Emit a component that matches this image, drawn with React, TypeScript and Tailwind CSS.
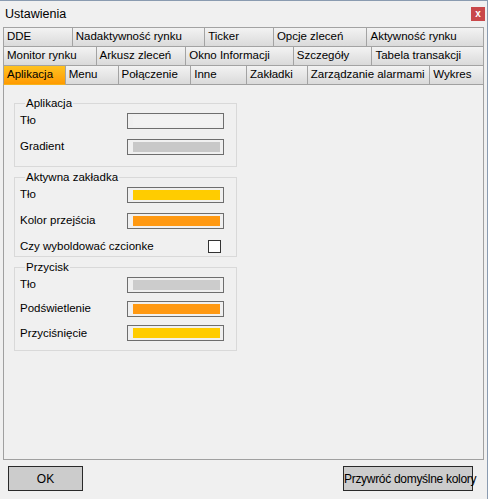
const rows: { label: string; w: number; active?: boolean }[][] = [
  [
    { label: 'DDE', w: 70 },
    { label: 'Nadaktywność rynku', w: 134 },
    { label: 'Ticker', w: 70 },
    { label: 'Opcje zleceń', w: 95 },
    { label: 'Aktywność rynku', w: 118 },
  ],
  [
    { label: 'Monitor rynku', w: 94 },
    { label: 'Arkusz zleceń', w: 91 },
    { label: 'Okno Informacji', w: 109 },
    { label: 'Szczegóły', w: 80 },
    { label: 'Tabela transakcji', w: 113 },
  ],
  [
    { label: 'Aplikacja', w: 63, active: true },
    { label: 'Menu', w: 54 },
    { label: 'Połączenie', w: 74 },
    { label: 'Inne', w: 57 },
    { label: 'Zakładki', w: 62 },
    { label: 'Zarządzanie alarmami', w: 124 },
    { label: 'Wykres', w: 55 },
  ],
]

function Swatch({ color }: { color: string }) {
  return (
    <div className="flex h-[16px] w-[97px] border border-[#6e6e6e] bg-[#f0f0f0] pl-[5px] pr-[3px] py-[2px]">
      <div className="flex-1" style={{ backgroundColor: color }} />
    </div>
  )
}

function Row({ label, color, className = '' }: { label: string; color: string; className?: string }) {
  return (
    <div className={`flex items-center ${className}`}>
      <span className="w-[107px]">{label}</span>
      <Swatch color={color} />
    </div>
  )
}

function Group({ title, className = '', children }: { title: string; className?: string; children: React.ReactNode }) {
  return (
    <fieldset className={`w-[223px] border border-[#d9d9d9] pl-[5px] ${className}`}>
      <legend className="ml-[5px] px-[1px] leading-[14px]">{title}</legend>
      {children}
    </fieldset>
  )
}

export default function App() {
  return (
    <div
      className="flex h-[499px] w-[488px] flex-col border-t border-r border-[#8a9bb0] bg-[#f0f0f0] text-[11.5px] whitespace-nowrap text-black"
      style={{ fontFamily: '"Liberation Sans", Arial, sans-serif' }}
    >
      <div className="flex h-[26px] items-center justify-between pl-[5px] pr-[2px]">
        <span className="text-[12.5px]">Ustawienia</span>
        <div className="flex h-[14px] w-[14px] items-center justify-center bg-[#c9484a] text-[10px] font-bold leading-none text-white">
          x
        </div>
      </div>

      <div className="px-[3px]">
        {rows.map((row, i) => (
          <div key={i} className={`flex ${i > 0 ? '-mt-px' : ''}`}>
            {row.map((t, j) => (
              <div
                key={t.label}
                style={{ width: t.w }}
                className={`flex h-[20px] items-center overflow-hidden border border-[#a3a3a3] pl-[3px] leading-none ${j > 0 ? '-ml-px' : ''} ${
                  t.active
                    ? 'relative z-10 border-b-[#f6b21a] bg-linear-to-b from-[#ffc21f] to-[#ff9a00]'
                    : 'bg-linear-to-b from-[#f3f3f3] to-[#dadada]'
                }`}
              >
                {t.label}
              </div>
            ))}
          </div>
        ))}
      </div>

      <div className="mx-[3px] -mt-px h-[376px] border border-[#a0a0a0] bg-[#f0f0f0] pl-[10px] pt-[11px]">
        <Group title="Aplikacja" className="h-[71px]">
          <Row label="Tło" color="#f2f2f2" className="mt-[2px]" />
          <Row label="Gradient" color="#c8c8c8" className="mt-[9px]" />
        </Group>

        <Group title="Aktywna zakładka" className="mt-[3px] h-[87px]">
          <Row label="Tło" color="#ffcc00" className="mt-[2px]" />
          <Row label="Kolor przejścia" color="#ff9912" className="mt-[9px]" />
          <div className="mt-[8px] flex items-center">
            <span className="w-[188px]">Czy wyboldować czcionke</span>
            <div className="h-[13px] w-[13px] border border-[#333333] bg-white" />
          </div>
        </Group>

        <Group title="Przycisk" className="mt-[3px] h-[91px]">
          <Row label="Tło" color="#cccccc" className="mt-[2px]" />
          <Row label="Podświetlenie" color="#ff9912" className="mt-[7px]" />
          <Row label="Przyciśnięcie" color="#ffcc00" className="mt-[7px]" />
        </Group>
      </div>

      <div className="mt-[6px] flex justify-between pl-[8px] pr-[14px]">
        <button className="h-[25px] w-[75px] border border-[#2a2a2a] bg-[#cccccc] text-[12px]">OK</button>
        <button className="h-[25px] w-[130px] border border-[#2a2a2a] bg-[#cccccc] text-[12px] tracking-[-0.3px]">
          Przywróć domyślne kolory
        </button>
      </div>
    </div>
  )
}
